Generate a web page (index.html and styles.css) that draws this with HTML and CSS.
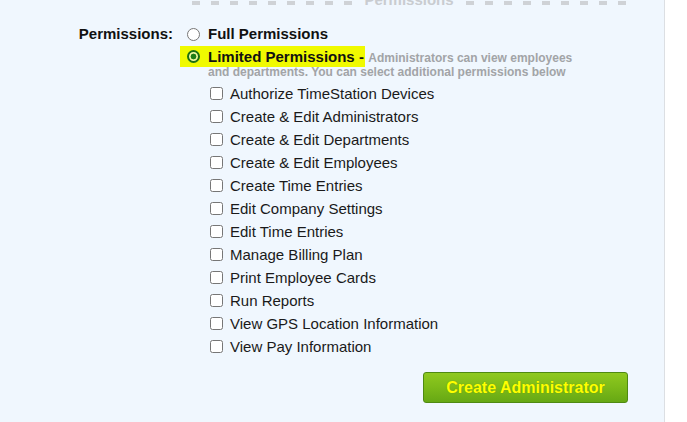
FILE: index.html
```html
<!DOCTYPE html>
<html lang="en">
<head>
<meta charset="utf-8">
<title>Permissions</title>
<link rel="stylesheet" href="styles.css">
</head>
<body>
<div class="panel">
  <div class="legend">
    <span class="dashes"></span>
    <span class="legend-text">Permissions</span>
    <span class="dashes"></span>
  </div>
  <div class="form">
    <div class="label">Permissions:</div>
    <div class="options">
      <label class="opt full">
        <span class="radio-cell"><input type="radio" name="perm" class="radio"></span>
        <span class="opt-title">Full Permissions</span>
      </label>
      <label class="opt limited">
        <span class="radio-cell hl-cell"><span class="radio-checked"></span></span>
        <span class="opt-text"><span class="hl">Limited Permissions -</span> <span class="desc">Administrators can view employees and departments. You can select additional permissions below</span></span>
      </label>
      <ul class="perms">
        <li><input type="checkbox" class="cb"><span>Authorize TimeStation Devices</span></li>
        <li><input type="checkbox" class="cb"><span>Create &amp; Edit Administrators</span></li>
        <li><input type="checkbox" class="cb"><span>Create &amp; Edit Departments</span></li>
        <li><input type="checkbox" class="cb"><span>Create &amp; Edit Employees</span></li>
        <li><input type="checkbox" class="cb"><span>Create Time Entries</span></li>
        <li><input type="checkbox" class="cb"><span>Edit Company Settings</span></li>
        <li><input type="checkbox" class="cb"><span>Edit Time Entries</span></li>
        <li><input type="checkbox" class="cb"><span>Manage Billing Plan</span></li>
        <li><input type="checkbox" class="cb"><span>Print Employee Cards</span></li>
        <li><input type="checkbox" class="cb"><span>Run Reports</span></li>
        <li><input type="checkbox" class="cb"><span>View GPS Location Information</span></li>
        <li><input type="checkbox" class="cb"><span>View Pay Information</span></li>
      </ul>
    </div>
  </div>
  <div class="actions">
    <button class="btn" type="button">Create Administrator</button>
  </div>
</div>
</body>
</html>
```

FILE: styles.css
```css
html, body {
  margin: 0;
  padding: 0;
  background: #ffffff;
}

body {
  font-family: "Liberation Sans", Arial, sans-serif;
  color: #111111;
  overflow: hidden;
}

.panel {
  width: 664px;
  height: 422px;
  background: #f0f7fe;
  border-right: 1px solid #dcdfe3;
  overflow: hidden;
}

.legend {
  display: flex;
  align-items: flex-end;
  height: 16px;
  margin-top: -8px;
  padding-left: 192px;
}

.dashes {
  width: 160px;
  height: 4px;
  margin-bottom: 3px;
  background: repeating-linear-gradient(to right, #cfd2d6 0 8px, transparent 8px 19px);
}

.legend-text {
  width: 114px;
  text-align: center;
  font-size: 15px;
  font-weight: bold;
  line-height: 16px;
  color: #c9ccd0;
}

.form {
  display: grid;
  grid-template-columns: 173px 1fr;
  column-gap: 7px;
  margin-top: 15px;
}

.label {
  text-align: right;
  font-size: 15px;
  font-weight: bold;
  line-height: 22px;
  color: #111111;
}

.options {
  display: flex;
  flex-direction: column;
}

.opt {
  display: flex;
  align-items: flex-start;
}

.full {
  height: 22px;
  line-height: 22px;
  margin-bottom: 1px;
}

.radio-cell {
  width: 28px;
  height: 21px;
  display: flex;
  align-items: center;
  justify-content: flex-start;
  flex: none;
}

.full .radio-cell {
  height: 22px;
}

.radio {
  margin: 0 0 0 7px;
  width: 13px;
  height: 13px;
}

.hl-cell {
  background: #f0fa00;
}

.radio-checked {
  display: block;
  box-sizing: border-box;
  width: 13px;
  height: 13px;
  margin-left: 7px;
  border: 2px solid #1c6f12;
  border-radius: 50%;
  background: radial-gradient(circle, #1f7d16 0 2.6px, #eef6a0 3.2px, #eef6a0 100%);
}

.opt-title {
  font-size: 15px;
  font-weight: bold;
  color: #111111;
}

.opt-text {
  display: block;
  font-size: 12px;
  line-height: 14px;
  width: 370px;
}

.hl {
  display: inline-block;
  font-size: 15px;
  font-weight: bold;
  line-height: 21px;
  background: #f0fa00;
  padding-right: 1px;
  margin-bottom: -3px;
  color: #111111;
}

.desc {
  font-weight: bold;
  color: #a2a4a7;
}

.perms {
  list-style: none;
  margin: 3px 0 0 30px;
  padding: 0;
}

.perms li {
  display: flex;
  align-items: center;
  height: 23px;
  font-size: 15px;
  color: #1a1a1a;
}

.cb {
  margin: 0 7px 0 0;
  width: 13px;
  height: 13px;
  flex: none;
}

.actions {
  display: flex;
  justify-content: flex-end;
  padding-right: 36px;
  margin-top: 14px;
}

.btn {
  width: 205px;
  height: 31px;
  padding: 0;
  border: 1px solid #4f8a12;
  border-radius: 3px;
  background: linear-gradient(to bottom, #8fc91f 0%, #7cba19 50%, #66a814 100%);
  color: #ffff00;
  font-family: "Liberation Sans", Arial, sans-serif;
  font-size: 16px;
  font-weight: bold;
  text-shadow: 0 0 1px rgba(70, 120, 0, 0.6);
  cursor: pointer;
}
```
